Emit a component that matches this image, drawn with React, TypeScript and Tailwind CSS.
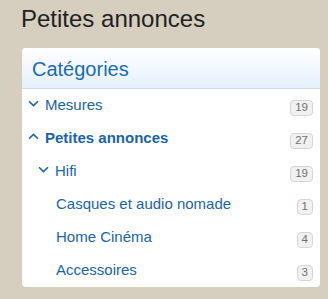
import React from "react";

const Down = ({ className = "" }: { className?: string }) => (
  <svg width="11" height="7" viewBox="0 0 11 7" className={className} fill="none">
    <path d="M1 1.2 L5.5 5.6 L10 1.2" stroke="#1a64aa" strokeWidth="1.6" />
  </svg>
);
const Up = ({ className = "" }: { className?: string }) => (
  <svg width="11" height="7" viewBox="0 0 11 7" className={className} fill="none">
    <path d="M1 5.8 L5.5 1.4 L10 5.8" stroke="#1a64aa" strokeWidth="1.6" />
  </svg>
);

const Badge = ({ n }: { n: string }) => (
  <span className="mt-[5px] h-[16px] min-w-[16px] px-[4px] flex items-center justify-center rounded-[4px] border border-[#d6d6d6] bg-[#f1f1f1] text-[11.5px] leading-none text-[#707070]">
    {n}
  </span>
);

export default function App() {
  const font = { fontFamily: '"Liberation Sans", Arial, sans-serif' };
  return (
    <div className="w-[328px] h-[299px] bg-[#d6cebf] overflow-hidden" style={font}>
      <div className="pl-[21px] pt-[6px] h-[48px] text-[24px] leading-[26px] text-[#222]">Petites annonces</div>
      <div className="ml-[22px] w-[298px] h-[239px] bg-white rounded-[4px] overflow-hidden">
        <div className="h-[41px] border-b border-[#d4d9de] bg-gradient-to-b from-white to-[#e4f0fb] pl-[10px] pt-[10px] text-[20px] leading-[22px] text-[#1b6cb3]">
          Catégories
        </div>
        <div className="flex flex-col text-[15px] text-[#1a64aa]">
          <div className="h-[33px] flex items-center pr-[7px]">
            <Down className="ml-[6px] mr-[6px] mt-[-5px]" />
            <span className="flex-1">Mesures</span>
            <Badge n="19" />
          </div>
          <div className="h-[33px] flex items-center pr-[7px]">
            <Up className="ml-[6px] mr-[6px] mt-[-4px]" />
            <span className="flex-1 font-bold">Petites annonces</span>
            <Badge n="27" />
          </div>
          <div className="h-[33px] flex items-center pr-[7px]">
            <Down className="ml-[16px] mr-[6px] mt-[-5px]" />
            <span className="flex-1">Hifi</span>
            <Badge n="19" />
          </div>
          <div className="h-[33px] flex items-center pr-[7px] pl-[34px]">
            <span className="flex-1">Casques et audio nomade</span>
            <Badge n="1" />
          </div>
          <div className="h-[33px] flex items-center pr-[7px] pl-[34px]">
            <span className="flex-1">Home Cinéma</span>
            <Badge n="4" />
          </div>
          <div className="h-[33px] flex items-center pr-[7px] pl-[34px]">
            <span className="flex-1">Accessoires</span>
            <Badge n="3" />
          </div>
        </div>
      </div>
    </div>
  );
}
